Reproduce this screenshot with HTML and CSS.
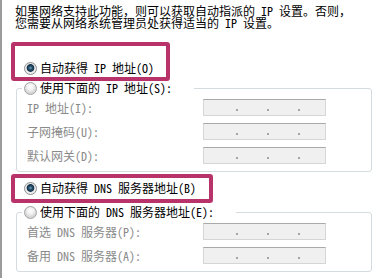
FILE: index.html
```html
<!DOCTYPE html>
<html>

<head>
	<title>Internet 协议版本 4 (TCP/IPv4) 属性</title>
	<meta charset="UTF-8">
	<link rel="stylesheet" href="styles.css">
</head>

<body>
	<div class="panel">
		<p class="intro">如果网络支持此功能，则可以获取自动指派的<span class="en"> IP </span>设置。否则，<br>您需要从网络系统管理员处获得适当的<span class="en"> IP </span>设置。</p>

		<div class="mark mark-ip">
			<label class="opt"><input type="radio" name="ip" checked>自动获得 IP 地址(O)</label>
		</div>
		<fieldset class="group">
			<legend><label class="opt"><input type="radio" name="ip">使用下面的 IP 地址(S):</label></legend>
			<div class="row"><span class="lbl">IP 地址(I):</span><div class="ip"><i></i><i></i><i></i></div></div>
			<div class="row"><span class="lbl">子网掩码(U):</span><div class="ip"><i></i><i></i><i></i></div></div>
			<div class="row"><span class="lbl">默认网关(D):</span><div class="ip"><i></i><i></i><i></i></div></div>
		</fieldset>

		<div class="mark mark-dns">
			<label class="opt"><input type="radio" name="dns" checked>自动获得 DNS 服务器地址(B)</label>
		</div>
		<fieldset class="group">
			<legend><label class="opt"><input type="radio" name="dns">使用下面的 DNS 服务器地址(E):</label></legend>
			<div class="row"><span class="lbl">首选 DNS 服务器(P):</span><div class="ip"><i></i><i></i><i></i></div></div>
			<div class="row"><span class="lbl">备用 DNS 服务器(A):</span><div class="ip"><i></i><i></i><i></i></div></div>
		</fieldset>
	</div>
</body>

</html>
```

FILE: styles.css
```css
body {
	margin: 0;
	background: #fff;
	font-family: "Noto Sans CJK SC", sans-serif;
	font-size: 12px;
	color: #000;
}

.panel {
	height: 278px;
	box-sizing: border-box;
	border-left: 2px solid #9b9b9b;
}

.intro {
	margin: 0;
	padding: 5px 0 0 13px;
	line-height: 12px;
	white-space: nowrap;
}

/* 半角英文，和宋体一样宽 */
.en,
.opt,
.lbl {
	font-feature-settings: "hwid";
}

/* 红框标注 */
.mark {
	box-sizing: border-box;
	margin-left: 9px;
	border: 4px solid #b8336a;
	border-radius: 3px;
	padding-left: 9px;
}

.mark-ip {
	width: 159px;
	height: 39px;
	margin-top: 13px;
	padding-top: 15px;
}

.mark-dns {
	width: 202px;
	height: 29px;
	margin-top: 2px;
	margin-bottom: 2px;
	padding-top: 3px;
}

.opt {
	display: flex;
	align-items: center;
	gap: 3px;
	height: 14px;
	line-height: 14px;
	white-space: nowrap;
}

.opt input {
	appearance: none;
	-webkit-appearance: none;
	box-sizing: border-box;
	width: 13px;
	height: 13px;
	margin: 0;
	border: 1px solid #a3a3a3;
	border-radius: 50%;
	background: radial-gradient(circle at 50% 35%, #fff 0, #f2f2f2 3px, #d6d6d6 6px);
}

.opt input:checked {
	border-color: #8a8c8e;
	background: radial-gradient(circle at 50% 45%, #7fb0cc 0, #2b5573 1.5px, #183247 3.5px, #dfe3e6 4.2px, #f7f7f7 6px);
}

.group {
	box-sizing: border-box;
	width: 356px;
	margin: 0 0 0 14px;
	padding: 4px 5px 7px;
	border: 1px solid #d5dcdf;
	border-radius: 3px;
}

.group legend {
	padding: 0 22px 0 2px;
}

.row {
	display: flex;
	align-items: center;
	height: 17px;
	margin-bottom: 7px;
}

.row:last-child {
	margin-bottom: 0;
}

.lbl {
	box-sizing: border-box;
	width: 181px;
	padding-left: 5px;
	color: #8a8a8a;
	white-space: nowrap;
}

.ip {
	box-sizing: border-box;
	display: flex;
	align-items: flex-end;
	gap: 29px;
	width: 123px;
	height: 17px;
	padding: 0 0 4px 32px;
	background: #f0f0f0;
	border: 1px solid #d6d6d6;
	border-top-color: #a9a9a9;
}

.ip i {
	width: 2px;
	height: 2px;
	background: #a5a5a5;
}
```
